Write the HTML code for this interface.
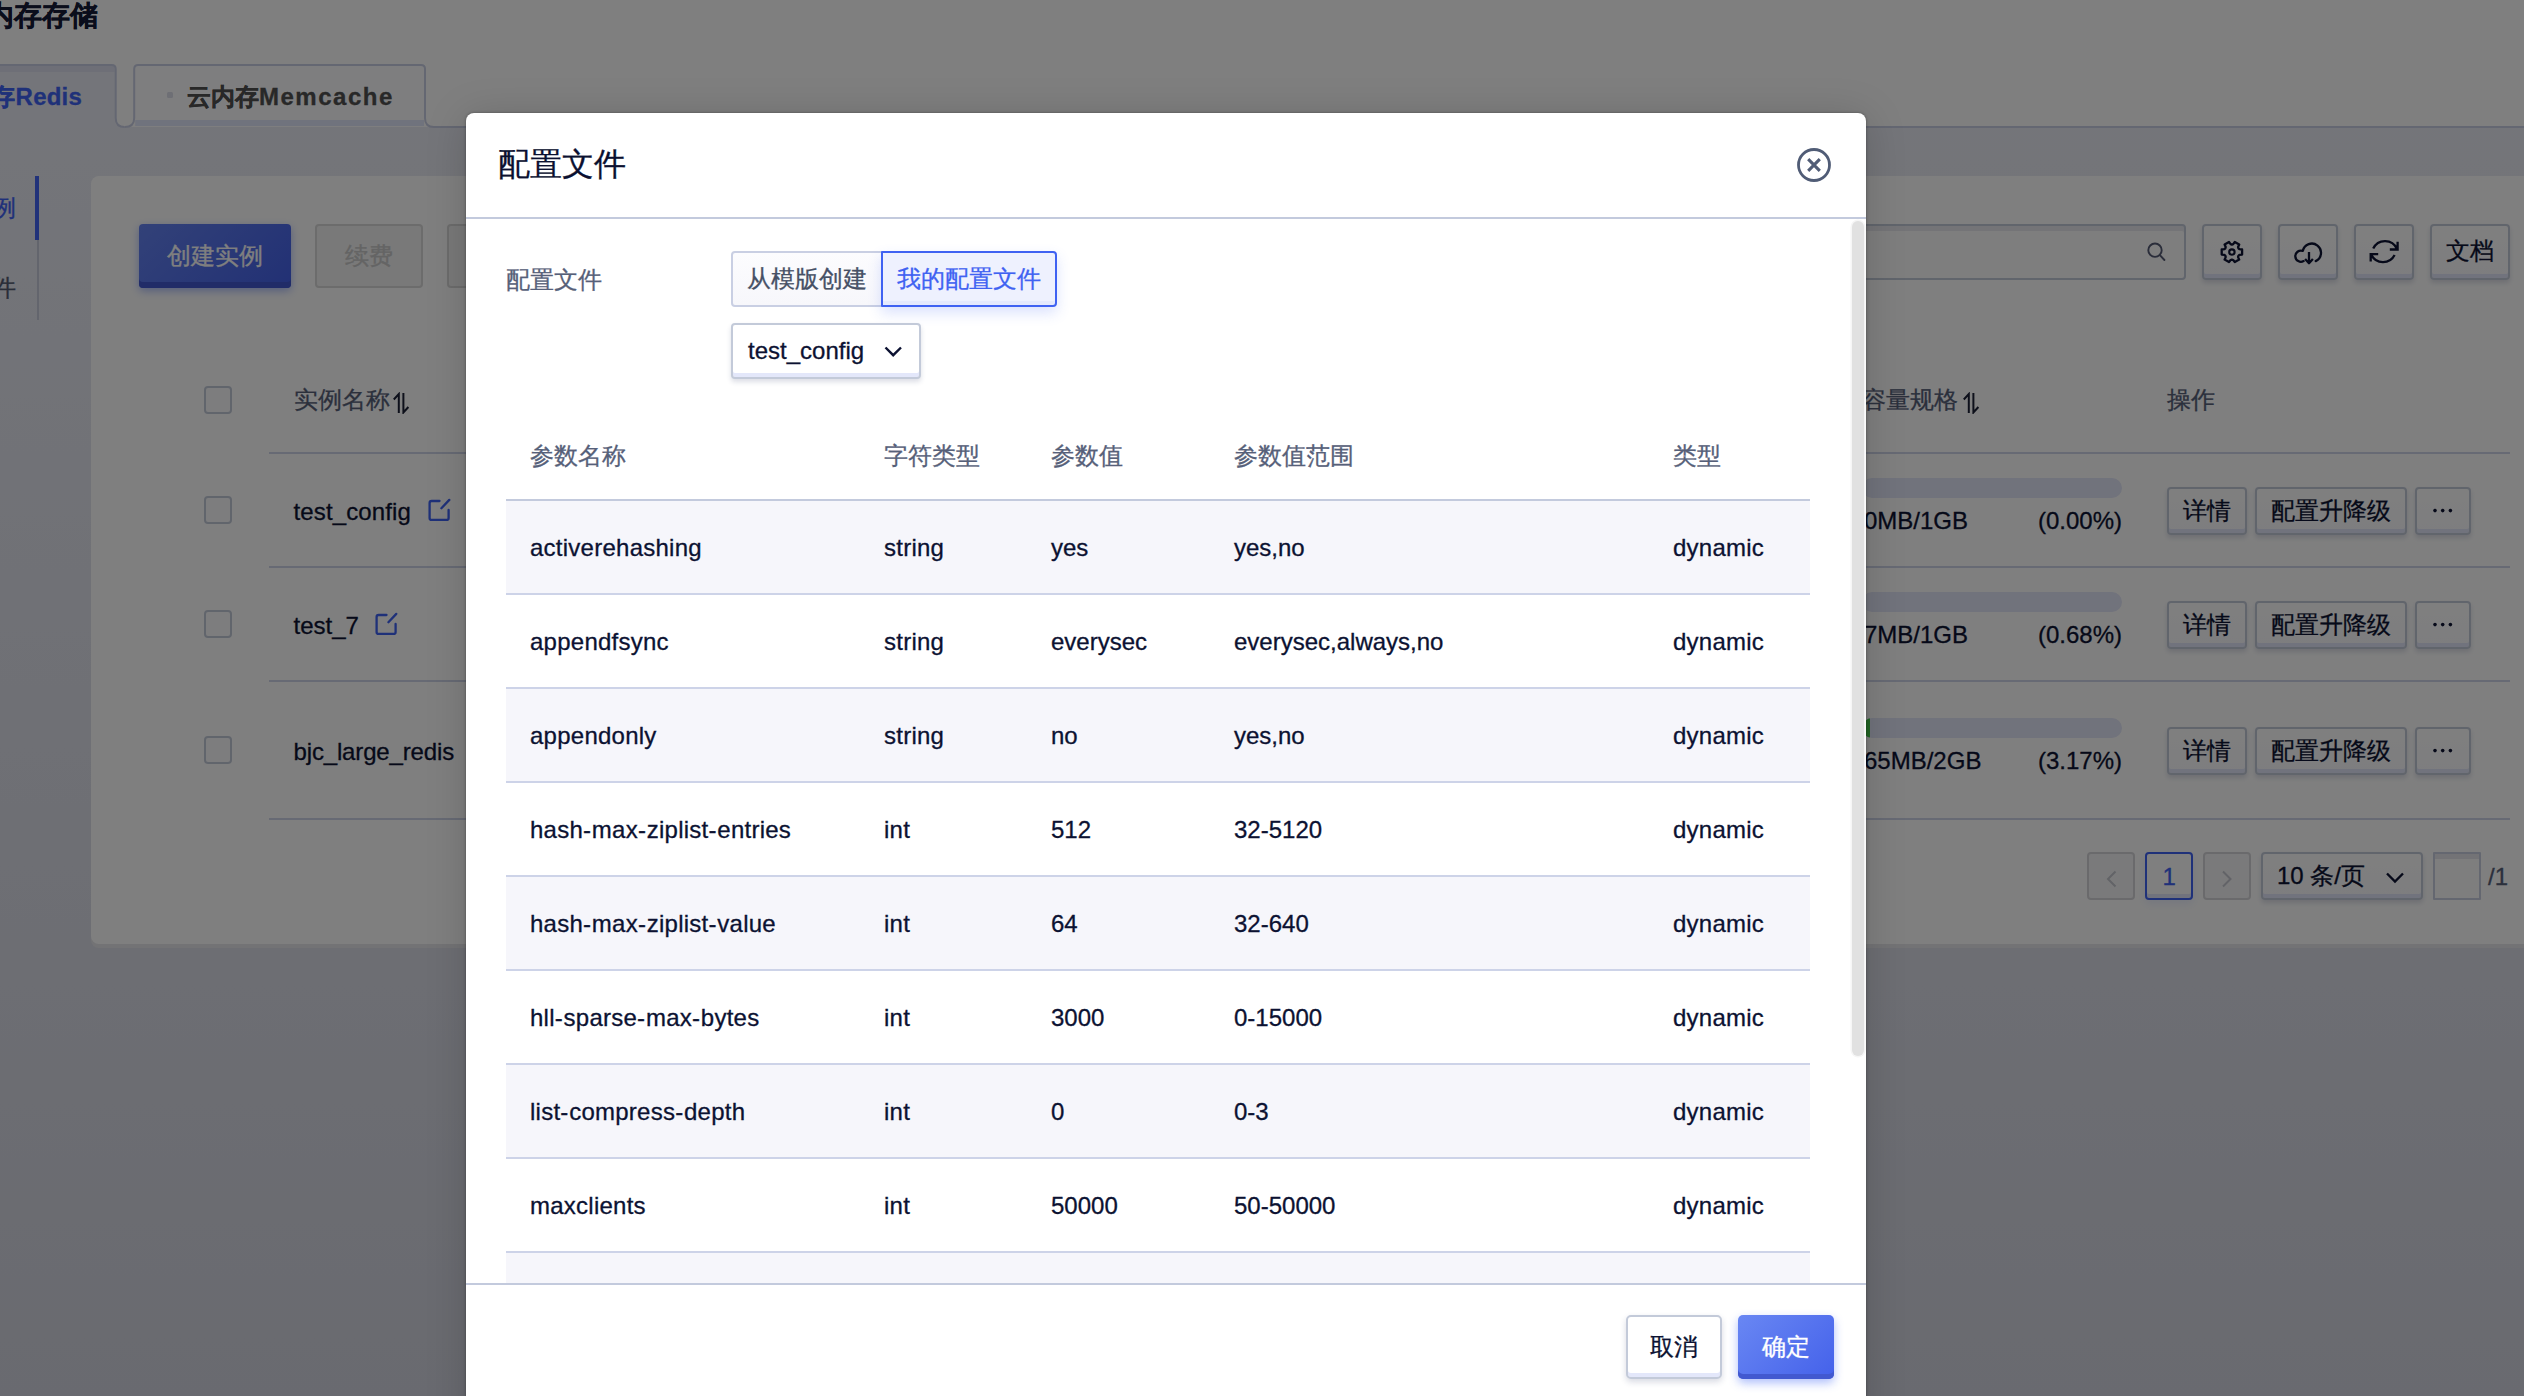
<!DOCTYPE html>
<html lang="zh">
<head>
<meta charset="utf-8">
<title>配置文件</title>
<style>
*{box-sizing:border-box;margin:0;padding:0}
html,body{width:2524px;height:1396px;overflow:hidden}
body{position:relative;-webkit-text-stroke:.3px;font-family:"Liberation Sans",sans-serif;font-size:24px;color:#0c1232;background:#e1e3ee}
.a{position:absolute;white-space:nowrap}
.t{position:absolute;white-space:nowrap;height:40px;line-height:40px}
#page{position:absolute;left:0;top:0;width:2524px;height:1396px;overflow:hidden;background:linear-gradient(180deg,#e9ebf4 100px,#d3d5e0 1396px)}
#mask{position:absolute;left:0;top:0;width:2524px;height:1396px;background:rgba(0,0,0,.5)}
/* underlying page */
.hdr{left:0;top:0;width:2524px;height:127px;background:#fff}
.card{left:91px;top:176px;width:2600px;height:768px;background:#fff;border-radius:8px;box-shadow:0 4px 0 #e7e7eb}
.hl{height:2px;background:#cfd4e8}
.cb{width:28px;height:28px;border:2px solid #c3cad9;border-radius:4px;background:#fbfbfd}
.btn{border:2px solid #c3cad9;border-radius:4px;background:linear-gradient(180deg,#fff,#fbfbfe);box-shadow:inset 0 -4px 0 #e3e7fa,0 3px 5px rgba(40,50,100,.16);text-align:center;color:#0c1232}
.btn svg{position:absolute}
.pg{border:2px solid #c3cad9;border-radius:4px}
.bar{height:20px;border-radius:10px;background:#e3e6f8;overflow:hidden}
/* modal */
#modal{position:absolute;left:466px;top:113px;width:1400px;height:1320px;background:#fff;border-radius:8px;box-shadow:0 0 3px rgba(0,0,0,.35),0 4px 40px rgba(0,0,0,.17)}
.row{position:absolute;left:40px;width:1304px;height:94px;border-bottom:2px solid #cdd3e8}
.row.s{background:#f6f6fb}
.row span{position:absolute;top:1px;letter-spacing:.25px;height:92px;line-height:92px;white-space:nowrap}
.row.hd span,.row .c3,.row .c4{letter-spacing:0}
.c1 b{font-weight:normal;letter-spacing:.8px}
.c1{left:24px}.c2{left:378px}.c3{left:545px}.c4{left:728px}.c5{left:1167px}
</style>
</head>
<body>
<div id="page">

<div class="a hdr"></div>
<div class="t" style="left:-42px;top:-4px;font-size:28px;font-weight:bold;color:#151a37">云内存存储</div>
<!-- tabs -->
<svg class="a" style="left:0;top:60px" width="2524" height="70" viewBox="0 60 2524 70">
  <path d="M-10,128 L-10,65 L111.7,65 Q115.7,65 115.7,69 L115.7,118 Q115.7,127 124.7,127 L124.7,128 Z" fill="#e9ebf4"/>
  <rect x="-10" y="66" width="124.7" height="6" fill="#dcdfee"/>
  <path d="M-10,65 L111.7,65 Q115.7,65 115.7,69 L115.7,118 Q115.7,127 124.7,127" fill="none" stroke="#c9cee4" stroke-width="2"/>
  <path d="M124.7,127 Q134.2,127 134.2,118 L134.2,69 Q134.2,65 138.2,65 L421,65 Q425,65 425,69 L425,118 Q425,127 434,127 Z" fill="#fdfdfe"/>
  <rect x="135.2" y="120" width="288.8" height="6" fill="#e1e6fa"/>
  <path d="M124.7,127 Q134.2,127 134.2,118 L134.2,69 Q134.2,65 138.2,65 L421,65 Q425,65 425,69 L425,118 Q425,127 434,127 L2524,127" fill="none" stroke="#c9cee4" stroke-width="2"/>
</svg>
<div class="t" style="left:-57px;top:77px;font-weight:bold;color:#3f62f2;letter-spacing:.2px">云内存Redis</div>
<div class="a" style="left:167px;top:92px;width:6px;height:6px;border-radius:1.5px;background:#dcdeea"></div>
<div class="t" style="left:187px;top:77px;font-weight:bold;color:#505050">云内存<span style="letter-spacing:1.5px">Memcache</span></div>
<!-- sidebar -->
<div class="a" style="left:35px;top:176px;width:4px;height:64px;background:#4364f4"></div>
<div class="a" style="left:37px;top:240px;width:2px;height:80px;background:#c6cadb"></div>
<div class="t" style="left:-32.5px;top:188px;color:#3f62f2">实例</div>
<div class="t" style="left:-32.5px;top:268px;color:#525a70">文件</div>
<!-- card -->
<div class="a card"></div>
<div class="a" style="left:139px;top:224px;width:152px;height:64px;border-radius:4px;background:linear-gradient(135deg,#6583f1,#4461ea);box-shadow:inset 0 -6px 0 #4259d0,0 3px 8px rgba(56,96,244,.42)"></div>
<div class="t" style="left:167px;top:235.5px;color:#fff">创建实例</div>
<div class="a" style="left:315px;top:224px;width:108px;height:64px;border-radius:4px;border:2px solid #d8d8d8;background:#f2f2f2"></div>
<div class="t" style="left:345px;top:235.5px;color:#c8c8c8">续费</div>
<div class="a" style="left:447px;top:224px;width:108px;height:64px;border-radius:4px;border:2px solid #d8d8d8;background:#f2f2f2"></div>
<!-- left table -->
<div class="a cb" style="left:204px;top:386px"></div>
<div class="t" style="left:294px;top:379.5px;color:#566079">实例名称</div>
<svg class="a" style="left:392px;top:392px" width="18" height="22" viewBox="392 392 18 22" fill="none" stroke="#1c2136" stroke-width="2"><path d="M398.8,413 V394 L393.8,399.5 M403.4,393 V412.5 L408.4,407"/></svg>
<div class="a hl" style="left:269px;top:452px;width:2241px"></div>
<div class="a cb" style="left:204px;top:496px"></div>
<div class="t" style="left:293.5px;top:492px;letter-spacing:.12px">test_config</div>
<svg class="a" style="left:426px;top:497px" width="26" height="26" viewBox="426 497 26 26" fill="none" stroke="#3f62f2" stroke-width="2.3" stroke-linecap="round" stroke-linejoin="round"><path d="M439.5,501 H431.6 Q429.6,501 429.6,503 V517.9 Q429.6,519.9 431.6,519.9 H446.6 Q448.6,519.9 448.6,517.9 V510 M441.4,508.2 L449.3,499.9"/></svg>
<div class="a hl" style="left:269px;top:566px;width:2241px"></div>
<div class="a cb" style="left:204px;top:610px"></div>
<div class="t" style="left:293.5px;top:606px">test_7</div>
<svg class="a" style="left:372.6px;top:611px" width="26" height="26" viewBox="426 497 26 26" fill="none" stroke="#3f62f2" stroke-width="2.3" stroke-linecap="round" stroke-linejoin="round"><path d="M439.5,501 H431.6 Q429.6,501 429.6,503 V517.9 Q429.6,519.9 431.6,519.9 H446.6 Q448.6,519.9 448.6,517.9 V510 M441.4,508.2 L449.3,499.9"/></svg>
<div class="a hl" style="left:269px;top:680px;width:2241px"></div>
<div class="a cb" style="left:204px;top:736px"></div>
<div class="t" style="left:293.5px;top:732px;letter-spacing:-.15px">bjc_large_redis</div>
<div class="a hl" style="left:269px;top:818px;width:2241px"></div>
<!-- toolbar right -->
<div class="a" style="left:1300px;top:224px;width:886px;height:56px;border:2px solid #c3cad9;border-radius:4px;background:#fcfcfd;box-shadow:inset 0 5px 0 #e9e9ee"></div>
<svg class="a" style="left:2144px;top:240px" width="24" height="24" viewBox="2144 240 24 24" fill="none" stroke="#555b74" stroke-width="1.9" stroke-linecap="round"><circle cx="2155" cy="250.2" r="6.7"/><path d="M2159.9,255.2 L2164.4,260"/></svg>
<div class="a btn" style="left:2202px;top:224px;width:60px;height:56px"></div>
<div class="a btn" style="left:2278px;top:224px;width:60px;height:56px"></div>
<div class="a btn" style="left:2354px;top:224px;width:60px;height:56px"></div>
<div class="a btn" style="left:2430px;top:224px;width:80px;height:56px"></div>
<div class="t" style="left:2446px;top:231px">文档</div>
<svg class="a" style="left:2202px;top:224px" width="310" height="56" viewBox="2202 224 310 56" fill="none" stroke="#0c1232" stroke-width="2.3" stroke-linejoin="round" stroke-linecap="round">
<path d="M2242.1,249.5 L2242.1,254.6 L2239.4,254.9 L2238.4,255.8 L2238.1,257.1 L2239.2,259.6 L2234.8,262.1 L2233.2,260.0 L2231.9,259.6 L2230.6,260.0 L2229.0,262.1 L2224.6,259.6 L2225.7,257.1 L2225.4,255.8 L2224.4,254.9 L2221.7,254.6 L2221.7,249.5 L2224.4,249.2 L2225.4,248.3 L2225.7,247.0 L2224.6,244.5 L2229.0,242.0 L2230.6,244.1 L2231.9,244.6 L2233.2,244.1 L2234.8,242.0 L2239.2,244.5 L2238.1,247.0 L2238.4,248.3 L2239.4,249.2 Z"/><circle cx="2231.9" cy="252.05" r="2.7" stroke-width="2.1"/>
<path d="M2303.6,261.1 A5.6,5.6 0 1 1 2302.8,250.9 A9.2,9.2 0 1 1 2315.7,261.1"/>
<path d="M2309,251.9 V262.6 M2305.1,259 L2309,263.2 L2312.9,259" stroke-linecap="butt"/>
<path d="M2373.2,248.6 A13,13 0 0 1 2396.9,248.8 M2397.6,241.8 V249.5 H2389.8 M2394.6,255 A13,13 0 0 1 2371.3,254.8 M2370.7,261.5 V254.1 H2378.2" stroke-linecap="butt" stroke-linejoin="miter"/>
</svg>
<!-- right table -->
<div class="t" style="left:1862px;top:379.5px;color:#566079">容量规格</div>
<svg class="a" style="left:1961.6px;top:392px" width="18" height="22" viewBox="392 392 18 22" fill="none" stroke="#1c2136" stroke-width="2"><path d="M398.8,413 V394 L393.8,399.5 M403.4,393 V412.5 L408.4,407"/></svg>
<div class="t" style="left:2167px;top:379.5px;color:#566079">操作</div>
<!-- row 1 -->
<div class="a bar" style="left:1862px;top:478px;width:260px"></div>
<div class="t" style="left:1864px;top:501px">0MB/1GB</div>
<div class="t" style="right:402px;top:501px">(0.00%)</div>
<div class="a btn" style="left:2167px;top:487px;width:80px;height:48px"></div><div class="t" style="left:2183px;top:490.5px">详情</div>
<div class="a btn" style="left:2255px;top:487px;width:152px;height:48px"></div><div class="t" style="left:2271px;top:490.5px">配置升降级</div>
<div class="a btn" style="left:2415px;top:487px;width:56px;height:48px"></div>
<svg class="a" style="left:2431px;top:506px" width="24" height="8" viewBox="0 0 24 8" fill="#0c1232"><circle cx="4" cy="4.6" r="1.8"/><circle cx="11.7" cy="4.6" r="1.8"/><circle cx="19.4" cy="4.6" r="1.8"/></svg>
<!-- row 2 -->
<div class="a bar" style="left:1862px;top:592px;width:260px"></div>
<div class="t" style="left:1864px;top:615px">7MB/1GB</div>
<div class="t" style="right:402px;top:615px">(0.68%)</div>
<div class="a btn" style="left:2167px;top:601px;width:80px;height:48px"></div><div class="t" style="left:2183px;top:604.5px">详情</div>
<div class="a btn" style="left:2255px;top:601px;width:152px;height:48px"></div><div class="t" style="left:2271px;top:604.5px">配置升降级</div>
<div class="a btn" style="left:2415px;top:601px;width:56px;height:48px"></div>
<svg class="a" style="left:2431px;top:620px" width="24" height="8" viewBox="0 0 24 8" fill="#0c1232"><circle cx="4" cy="4.6" r="1.8"/><circle cx="11.7" cy="4.6" r="1.8"/><circle cx="19.4" cy="4.6" r="1.8"/></svg>
<!-- row 3 -->
<div class="a bar" style="left:1862px;top:718px;width:260px"><div style="width:8.3px;height:20px;background:#46cf4a"></div></div>
<div class="t" style="left:1864px;top:741px">65MB/2GB</div>
<div class="t" style="right:402px;top:741px">(3.17%)</div>
<div class="a btn" style="left:2167px;top:727px;width:80px;height:48px"></div><div class="t" style="left:2183px;top:730.5px">详情</div>
<div class="a btn" style="left:2255px;top:727px;width:152px;height:48px"></div><div class="t" style="left:2271px;top:730.5px">配置升降级</div>
<div class="a btn" style="left:2415px;top:727px;width:56px;height:48px"></div>
<svg class="a" style="left:2431px;top:746px" width="24" height="8" viewBox="0 0 24 8" fill="#0c1232"><circle cx="4" cy="4.6" r="1.8"/><circle cx="11.7" cy="4.6" r="1.8"/><circle cx="19.4" cy="4.6" r="1.8"/></svg>
<!-- pagination -->
<div class="a pg" style="left:2087px;top:852px;width:48px;height:48px;border-color:#d5d5d9;background:#f5f5f6"></div>
<svg class="a" style="left:2100px;top:866px" width="24" height="26" viewBox="0 0 24 26" fill="none" stroke="#c4c6ce" stroke-width="2"><path d="M15.5,5.5 L8,13 L15.5,20.5"/></svg>
<div class="a pg" style="left:2145px;top:852px;width:48px;height:48px;border-color:#3f62f2;background:#fff;box-shadow:inset 0 -4px 0 #e3e7fa,0 4px 8px rgba(56,96,244,.10)"></div>
<div class="t" style="left:2162.5px;top:857px;color:#3f62f2">1</div>
<div class="a pg" style="left:2203px;top:852px;width:48px;height:48px;border-color:#d5d5d9;background:#f5f5f6"></div>
<svg class="a" style="left:2214px;top:866px" width="24" height="26" viewBox="0 0 24 26" fill="none" stroke="#c4c6ce" stroke-width="2"><path d="M9,5.5 L16.5,13 L9,20.5"/></svg>
<div class="a btn" style="left:2261px;top:852px;width:162px;height:48px"></div>
<div class="t" style="left:2277px;top:856px">10 条/页</div>
<svg class="a" style="left:2384px;top:868px" width="22" height="18" viewBox="0 0 22 18" fill="none" stroke="#0c1232" stroke-width="2.4"><path d="M3,5.5 L11,13.5 L19,5.5"/></svg>
<div class="a pg" style="left:2433px;top:852px;width:48px;height:48px;border-color:#c8cee0;border-radius:1px;background:#fcfcfd;box-shadow:inset 0 5px 0 #e7e7ec"></div>
<div class="t" style="left:2488px;top:857px;color:#566079">/1</div>

</div>
<div id="mask"></div>
<div id="modal">

<div class="t" style="left:32px;top:27px;height:48px;line-height:48px;font-size:32px;color:#0b1030">配置文件</div>
<svg class="a" style="left:1328px;top:32px" width="40" height="40" viewBox="0 0 40 40" fill="none" stroke="#505c76" stroke-width="2.8"><circle cx="20" cy="20" r="15.5"/><path d="M14.2,14.2 L25.8,25.8 M25.8,14.2 L14.2,25.8" stroke-width="3.1"/></svg>
<div class="a" style="left:0;top:104px;width:1400px;height:2px;background:#c3cadd"></div>
<!-- body -->
<div class="a" style="left:0;top:106px;width:1400px;height:1064px;overflow:hidden">
  <div class="t" style="left:40px;top:41px;color:#566079">配置文件</div>
  <div class="a" style="left:265px;top:32px;width:152px;height:56px;border:2px solid #c9cfe3;border-radius:4px 0 0 4px;background:linear-gradient(180deg,#fcfcfe,#f7f7fb)"></div>
  <div class="t" style="left:281px;top:40px;color:#465065">从模版创建</div>
  <div class="a" style="left:415px;top:32px;width:176px;height:56px;border:2px solid #3f62f2;border-radius:1px 4px 4px 1px;background:#eef1fe;box-shadow:inset 0 -4px 0 #e4e9fd,0 6px 14px rgba(56,96,244,.18)"></div>
  <div class="t" style="left:431px;top:40px;color:#3f62f2">我的配置文件</div>
  <div class="a" style="left:265px;top:104px;width:190px;height:56px;border:2px solid #c3cad9;border-radius:4px;background:#fff;box-shadow:inset 0 -4px 0 #e3e7fa,0 3px 5px rgba(40,50,100,.16)"></div>
  <div class="t" style="left:282px;top:112px">test_config</div>
  <svg class="a" style="left:416px;top:123px" width="22" height="18" viewBox="0 0 22 18" fill="none" stroke="#0c1232" stroke-width="2.4"><path d="M3.5,5.5 L11.2,13.2 L19,5.5"/></svg>
  <div class="row hd" style="top:188px;border-bottom-color:#c3cadd;color:#566079"><span class="c1" style="top:3px">参数名称</span><span class="c2" style="top:3px">字符类型</span><span class="c3" style="top:3px">参数值</span><span class="c4" style="top:3px">参数值范围</span><span class="c5" style="top:3px">类型</span></div>
<div class="row s" style="top:282px"><span class="c1">activerehashing</span><span class="c2">string</span><span class="c3">yes</span><span class="c4">yes,no</span><span class="c5">dynamic</span></div>
<div class="row" style="top:376px"><span class="c1">appendfsync</span><span class="c2">string</span><span class="c3">everysec</span><span class="c4">everysec,always,no</span><span class="c5">dynamic</span></div>
<div class="row s" style="top:470px"><span class="c1">appendonly</span><span class="c2">string</span><span class="c3">no</span><span class="c4">yes,no</span><span class="c5">dynamic</span></div>
<div class="row" style="top:564px"><span class="c1">hash<b>-</b>max<b>-</b>ziplist<b>-</b>entries</span><span class="c2">int</span><span class="c3">512</span><span class="c4">32-5120</span><span class="c5">dynamic</span></div>
<div class="row s" style="top:658px"><span class="c1">hash<b>-</b>max<b>-</b>ziplist<b>-</b>value</span><span class="c2">int</span><span class="c3">64</span><span class="c4">32-640</span><span class="c5">dynamic</span></div>
<div class="row" style="top:752px"><span class="c1">hll<b>-</b>sparse<b>-</b>max<b>-</b>bytes</span><span class="c2">int</span><span class="c3">3000</span><span class="c4">0-15000</span><span class="c5">dynamic</span></div>
<div class="row s" style="top:846px"><span class="c1">list<b>-</b>compress<b>-</b>depth</span><span class="c2">int</span><span class="c3">0</span><span class="c4">0-3</span><span class="c5">dynamic</span></div>
<div class="row" style="top:940px"><span class="c1">maxclients</span><span class="c2">int</span><span class="c3">50000</span><span class="c4">50-50000</span><span class="c5">dynamic</span></div>
<div class="row s" style="top:1034px"><span class="c1">maxmemory<b>-</b>policy</span><span class="c2">string</span><span class="c3">volatile-lru</span><span class="c4"></span><span class="c5">dynamic</span></div>

</div>
<div class="a" style="left:1386px;top:108px;width:12px;height:835px;border-radius:6px;background:#e1e1e1;box-shadow:0 0 0 1.5px #f6f6f6"></div>
<div class="a" style="left:0;top:1170px;width:1400px;height:2px;background:#c3cadd"></div>
<div class="a" style="left:1160px;top:1202px;width:96px;height:64px;border:2px solid #c3cad9;border-radius:5px;background:#fff;box-shadow:inset 0 -4px 0 #e3e7fa,0 3px 6px rgba(40,50,100,.18)"></div>
<div class="t" style="left:1184px;top:1213.5px">取消</div>
<div class="a" style="left:1272px;top:1202px;width:96px;height:64px;border-radius:5px;background:linear-gradient(135deg,#6987f3,#4461ea);box-shadow:inset 0 -5px 0 #4259d0,0 4px 10px rgba(56,96,244,.4)"></div>
<div class="t" style="left:1296px;top:1213.5px;color:#fff">确定</div>

</div>
</body>
</html>
